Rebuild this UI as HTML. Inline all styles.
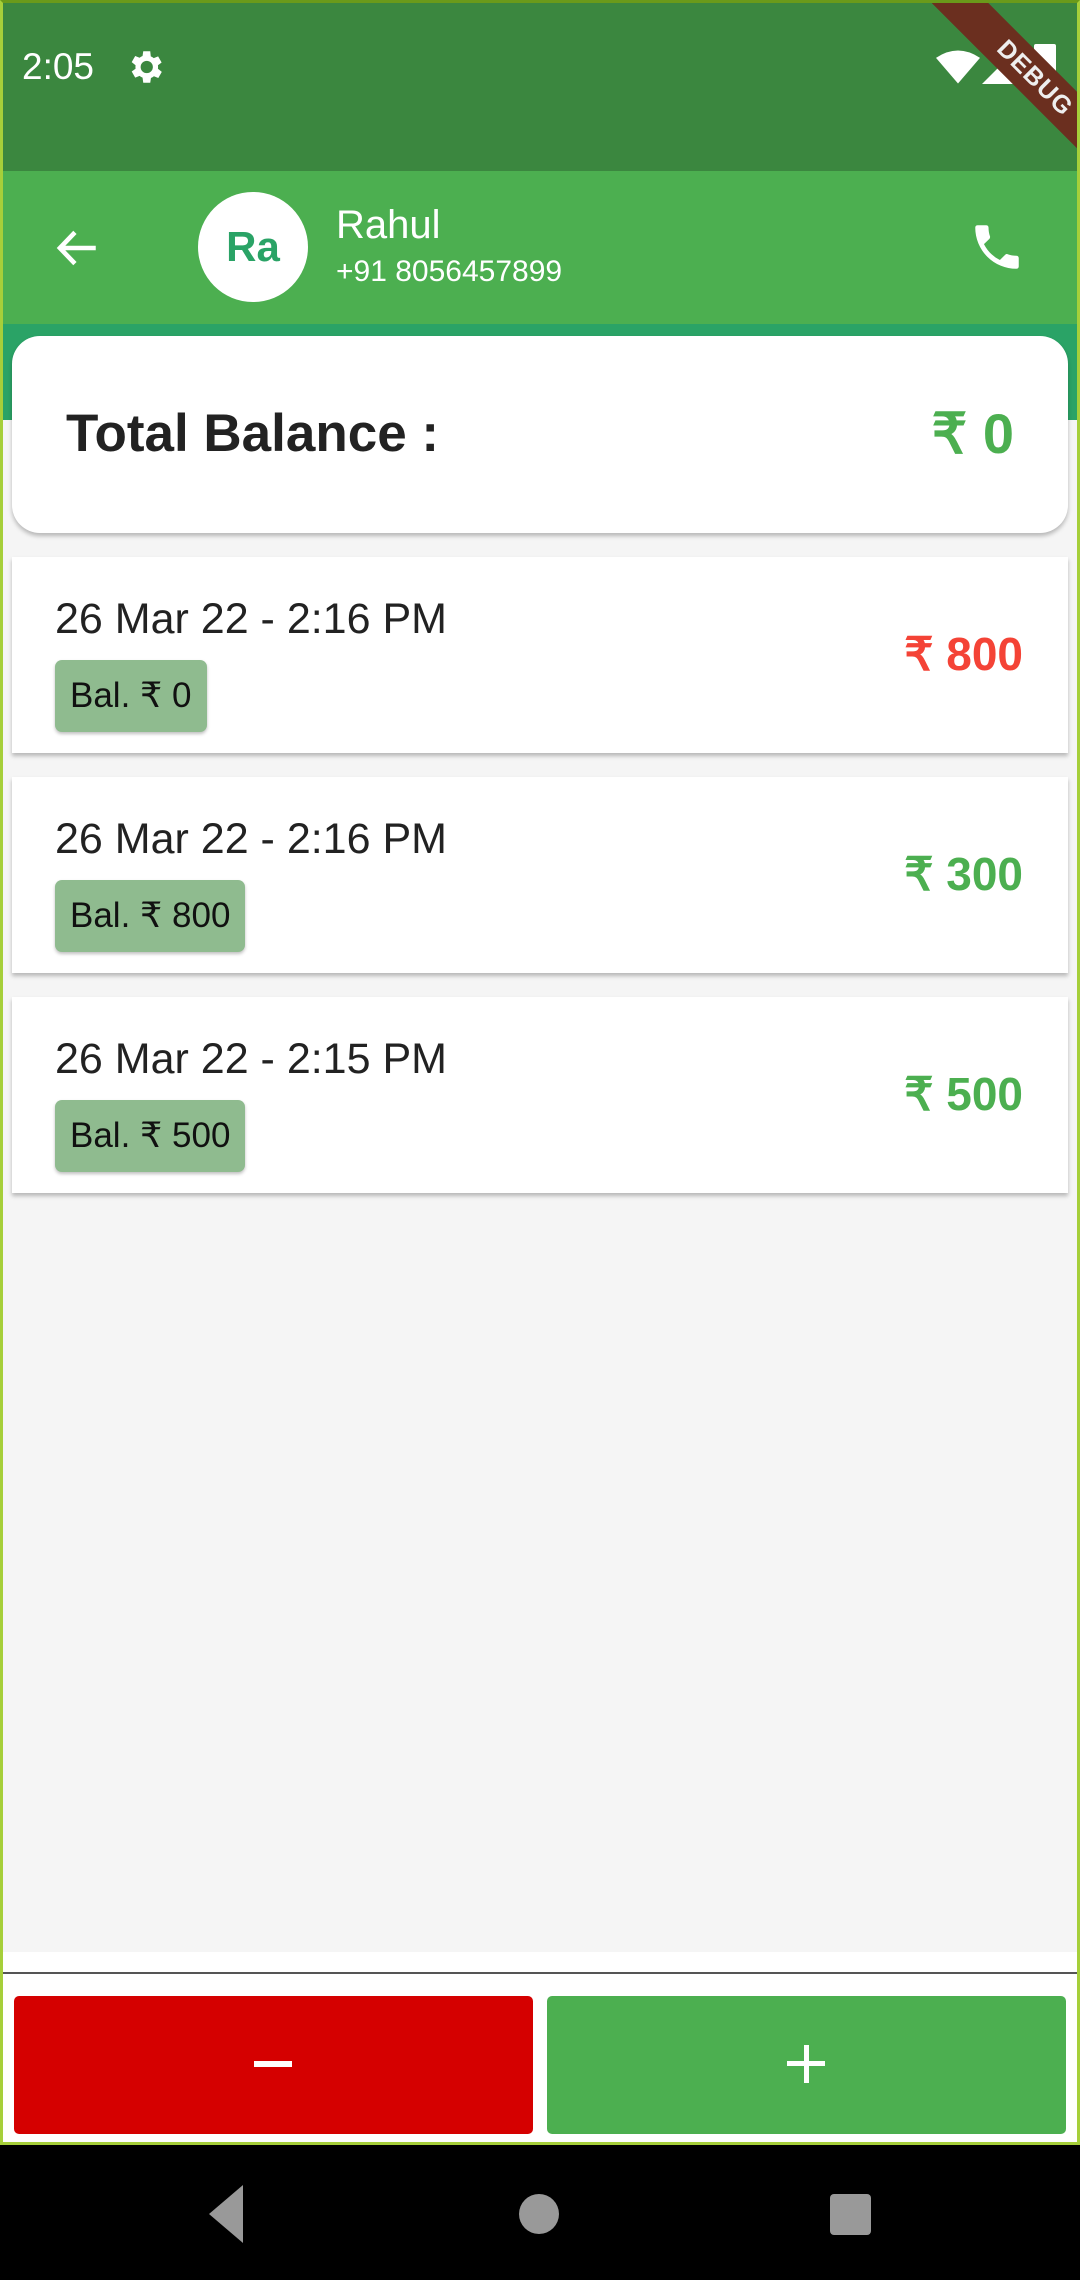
<!DOCTYPE html>
<html><head><meta charset="utf-8"><style>
*{margin:0;padding:0;box-sizing:border-box}
body{width:1080px;height:2280px;position:relative;overflow:hidden;background:#000;font-family:"Liberation Sans",sans-serif}
.screen{position:absolute;left:0;top:0;width:1080px;height:2145px;background:#fff;overflow:hidden}
.frame{position:absolute;left:0;top:0;width:1080px;height:2145px;border:3px solid #a6cf3a;border-top-color:#6a9a1a;pointer-events:none}
.status{position:absolute;left:0;top:0;width:1080px;height:171px;background:#3b873f}
.appbar{position:absolute;left:0;top:171px;width:1080px;height:153px;background:#4caf50}
.teal{position:absolute;left:0;top:324px;width:1080px;height:96px;background:#2aa366}
.grey{position:absolute;left:0;top:420px;width:1080px;height:1532px;background:#f5f5f5}
.abs{position:absolute}
.card{position:absolute;left:12px;width:1056px;background:#fff;box-shadow:0 3px 4px rgba(0,0,0,.25)}
.date{position:absolute;left:43px;font-size:43px;color:#222}
.badge{position:absolute;left:43px;height:72px;background:#8fbb8f;border-radius:7px;font-size:35px;color:#111;line-height:72px;padding:0 15px;box-shadow:0 2px 3px rgba(0,0,0,.25)}
.amt{position:absolute;right:45px;font-size:46px;font-weight:bold}
</style></head><body>
<div class="screen">
<div class="status"></div>
<div class="appbar"></div>
<div class="teal"></div>
<div class="grey"></div>
<div class="abs" style="left:22px;top:46px;font-size:37px;color:#fff">2:05</div>
<svg class="abs" style="left:124px;top:46px" width="42" height="42" viewBox="0 0 24 24"><path fill="#fff" d="M19.4 13a7.5 7.5 0 0 0 0-2l2.1-1.6-2-3.5-2.5 1a7 7 0 0 0-1.7-1L15 3h-4l-.4 2.7a7 7 0 0 0-1.7 1l-2.5-1-2 3.5L6.6 11a7.5 7.5 0 0 0 0 2l-2.2 1.6 2 3.5 2.5-1a7 7 0 0 0 1.7 1L11 21h4l.4-2.7a7 7 0 0 0 1.7-1l2.5 1 2-3.5zM13 15.5a3.5 3.5 0 1 1 0-7 3.5 3.5 0 0 1 0 7z"/></svg>
<svg class="abs" style="left:936px;top:50px" width="44" height="34" viewBox="0 0 24 18"><path fill="#fff" d="M12 18L0 4Q12-4 24 4z"/></svg>
<svg class="abs" style="left:982px;top:48px" width="36" height="36" viewBox="0 0 24 24"><path fill="#fff" d="M24 0v24H0z"/></svg>
<div class="abs" style="left:1034px;top:44px;width:22px;height:40px;background:#fff;border-radius:2px"></div>
<div class="abs" style="left:885px;top:58px;width:300px;height:40px;background:#6b2f1f;transform:rotate(45deg);color:#eee;font-weight:bold;font-size:25px;text-align:center;line-height:40px;letter-spacing:1px">DEBUG</div>
<svg class="abs" style="left:52px;top:223px" width="50" height="50" viewBox="0 0 24 24"><path fill="none" stroke="#fff" stroke-width="2.2" d="M21 12H4M11 4.5L3.8 12l7.2 7.5"/></svg>
<div class="abs" style="left:198px;top:192px;width:110px;height:110px;border-radius:50%;background:#fff;color:#2aa366;font-weight:bold;font-size:42px;text-align:center;line-height:110px">Ra</div>
<div class="abs" style="left:336px;top:203px;font-size:40px;color:#fff">Rahul</div>
<div class="abs" style="left:336px;top:255px;font-size:30px;color:#fff">+91 8056457899</div>
<svg class="abs" style="left:968px;top:218px" width="58" height="58" viewBox="0 0 24 24"><path fill="#fff" d="M6.6 10.8a15 15 0 0 0 6.6 6.6l2.2-2.2c.3-.3.7-.4 1-.2 1.1.4 2.3.6 3.6.6.6 0 1 .4 1 1V20c0 .6-.4 1-1 1A17 17 0 0 1 3 4c0-.6.4-1 1-1h3.5c.6 0 1 .4 1 1 0 1.3.2 2.5.6 3.6.1.3 0 .7-.2 1z"/></svg>

<div class="card" style="top:336px;height:197px;border-radius:28px"></div>
<div class="abs" style="left:66px;top:403px;font-size:53px;font-weight:bold;color:#222">Total Balance :</div>
<div class="abs" style="right:66px;top:401px;font-size:56px;font-weight:bold;color:#4caf50">₹ 0</div>

<div class="card" style="top:557px;height:196px"><div class="date" style="top:38px">26 Mar 22 - 2:16 PM</div><div class="badge" style="top:103px">Bal. ₹ 0</div><div class="amt" style="top:70px;color:#f44336">₹ 800</div></div>
<div class="card" style="top:777px;height:196px"><div class="date" style="top:38px">26 Mar 22 - 2:16 PM</div><div class="badge" style="top:103px">Bal. ₹ 800</div><div class="amt" style="top:70px;color:#4caf50">₹ 300</div></div>
<div class="card" style="top:997px;height:196px"><div class="date" style="top:38px">26 Mar 22 - 2:15 PM</div><div class="badge" style="top:103px">Bal. ₹ 500</div><div class="amt" style="top:70px;color:#4caf50">₹ 500</div></div>

<div class="abs" style="left:0;top:1972px;width:1080px;height:2px;background:#555"></div>
<div class="abs" style="left:14px;top:1996px;width:519px;height:138px;background:#d50000;border-radius:5px"></div>
<div class="abs" style="left:254px;top:2061px;width:38px;height:6px;background:#fff"></div>
<div class="abs" style="left:547px;top:1996px;width:519px;height:138px;background:#4caf50;border-radius:5px"></div>
<div class="abs" style="left:787px;top:2061px;width:38px;height:5px;background:#fff"></div>
<div class="abs" style="left:804px;top:2045px;width:5px;height:38px;background:#fff"></div>
<div class="frame"></div>
</div>
<svg class="abs" style="left:205px;top:2183px" width="40" height="62" viewBox="0 0 40 62"><path fill="#999" d="M38 2v58L4 31z"/></svg>
<div class="abs" style="left:519px;top:2194px;width:40px;height:40px;border-radius:50%;background:#999"></div>
<div class="abs" style="left:830px;top:2194px;width:41px;height:41px;border-radius:4px;background:#999"></div>
</body></html>
